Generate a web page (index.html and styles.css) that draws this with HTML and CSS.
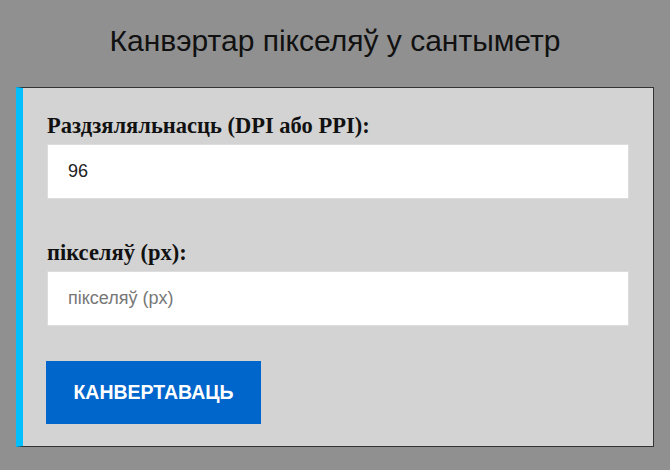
FILE: index.html
```html
<!DOCTYPE html>
<html lang="be">
<head>
<meta charset="utf-8">
<title>Канвэртар пікселяў у сантыметр</title>
<link rel="stylesheet" href="styles.css">
</head>
<body>
<h1 class="title">Канвэртар пікселяў у сантыметр</h1>
<form class="panel">
  <label class="label" for="dpi">Раздзяляльнасць (DPI або PPI):</label>
  <input class="field" id="dpi" type="text" value="96">
  <label class="label label-gap" for="px">пікселяў (px):</label>
  <input class="field" id="px" type="text" placeholder="пікселяў (px)">
  <button class="btn" type="button">Канвертаваць</button>
</form>
</body>
</html>
```
FILE: styles.css
```css
html, body {
  margin: 0;
  padding: 0;
}
body {
  background: #909090;
  padding: 0 16px;
  font-family: "Liberation Sans", Arial, sans-serif;
}
.title {
  margin: 0;
  padding: 20px 0 26px;
  text-align: center;
  font-weight: normal;
  font-size: 30px;
  line-height: 41px;
  color: #111;
}
.panel {
  display: flex;
  flex-direction: column;
  align-items: flex-start;
  background: #d3d3d3;
  border: 1px solid #333;
  border-left: 7px solid #00bfff;
  padding: 25px 24px 22px;
}
.label {
  font-family: "Liberation Serif", "Times New Roman", serif;
  font-weight: bold;
  font-size: 22.5px;
  line-height: 26px;
  color: #111;
  margin-bottom: 5px;
}
.label-gap {
  margin-top: 41px;
}
.field {
  box-sizing: border-box;
  width: 100%;
  height: 55px;
  border: 1px solid #ddd;
  background: #fff;
  padding: 0 20px;
  font-family: "Liberation Sans", Arial, sans-serif;
  font-size: 18px;
  color: #222;
  outline: none;
}
.field::placeholder {
  color: #777;
}
.btn {
  margin-top: 35px;
  margin-left: -1px;
  width: 215px;
  height: 63px;
  border: 0;
  background: #0066cc;
  color: #fff;
  font-family: "Liberation Sans", Arial, sans-serif;
  font-weight: bold;
  font-size: 19.5px;
  text-transform: uppercase;
  cursor: pointer;
}
```
